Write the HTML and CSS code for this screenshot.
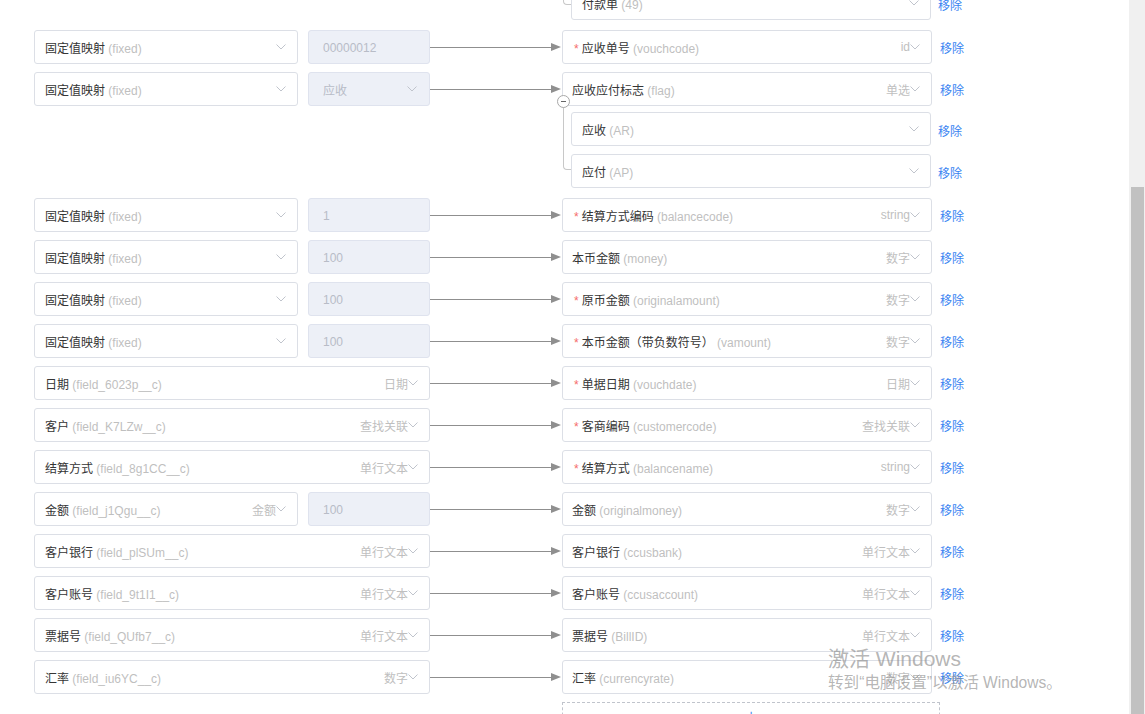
FILE: index.html
```html
<!DOCTYPE html>
<html lang="zh-CN">
<head>
  <meta charset="UTF-8" />
  <meta name="viewport" content="width=device-width, initial-scale=1.0"/>
  <title>字段映射</title>
  <link rel="stylesheet" href="styles.css">
</head>
<body>
  <div class="screen">
    <main class="canvas">
      <div class="mapping">

        <div class="children cont">
          <div class="sub">
            <div class="dst"><span class="name">付款单 <em>(49)</em></span><svg class="chev" viewBox="0 0 10 6"><path d="M.5.5 5 5l4.5-4.5"/></svg></div>
            <a class="remove">移除</a>
          </div>
        </div>

        <div class="row">
          <div class="src">
            <div class="sel"><span class="name">固定值映射 <em>(fixed)</em></span><svg class="chev" viewBox="0 0 10 6"><path d="M.5.5 5 5l4.5-4.5"/></svg></div>
            <div class="val">00000012</div>
          </div>
          <div class="link"><span class="line"></span><span class="head"></span></div>
          <div class="dst"><span class="name"><b class="req">*</b>应收单号 <em>(vouchcode)</em></span><span class="type">id<svg class="chev" viewBox="0 0 10 6"><path d="M.5.5 5 5l4.5-4.5"/></svg></span></div>
          <a class="remove">移除</a>
        </div>

        <div class="row">
          <div class="src">
            <div class="sel"><span class="name">固定值映射 <em>(fixed)</em></span><svg class="chev" viewBox="0 0 10 6"><path d="M.5.5 5 5l4.5-4.5"/></svg></div>
            <div class="val pick"><span>应收</span><svg class="chev" viewBox="0 0 10 6"><path d="M.5.5 5 5l4.5-4.5"/></svg></div>
          </div>
          <div class="link"><span class="line"></span><span class="head"></span></div>
          <div class="dst"><span class="name">应收应付标志 <em>(flag)</em></span><span class="type">单选<svg class="chev" viewBox="0 0 10 6"><path d="M.5.5 5 5l4.5-4.5"/></svg></span></div>
          <a class="remove">移除</a>
        </div>
        <div class="children">
          <span class="toggle"></span>
          <div class="sub">
            <div class="dst"><span class="name">应收 <em>(AR)</em></span><svg class="chev" viewBox="0 0 10 6"><path d="M.5.5 5 5l4.5-4.5"/></svg></div>
            <a class="remove">移除</a>
          </div>
          <div class="sub">
            <div class="dst"><span class="name">应付 <em>(AP)</em></span><svg class="chev" viewBox="0 0 10 6"><path d="M.5.5 5 5l4.5-4.5"/></svg></div>
            <a class="remove">移除</a>
          </div>
        </div>

        <div class="row">
          <div class="src">
            <div class="sel"><span class="name">固定值映射 <em>(fixed)</em></span><svg class="chev" viewBox="0 0 10 6"><path d="M.5.5 5 5l4.5-4.5"/></svg></div>
            <div class="val">1</div>
          </div>
          <div class="link"><span class="line"></span><span class="head"></span></div>
          <div class="dst"><span class="name"><b class="req">*</b>结算方式编码 <em>(balancecode)</em></span><span class="type">string<svg class="chev" viewBox="0 0 10 6"><path d="M.5.5 5 5l4.5-4.5"/></svg></span></div>
          <a class="remove">移除</a>
        </div>

        <div class="row">
          <div class="src">
            <div class="sel"><span class="name">固定值映射 <em>(fixed)</em></span><svg class="chev" viewBox="0 0 10 6"><path d="M.5.5 5 5l4.5-4.5"/></svg></div>
            <div class="val">100</div>
          </div>
          <div class="link"><span class="line"></span><span class="head"></span></div>
          <div class="dst"><span class="name">本币金额 <em>(money)</em></span><span class="type">数字<svg class="chev" viewBox="0 0 10 6"><path d="M.5.5 5 5l4.5-4.5"/></svg></span></div>
          <a class="remove">移除</a>
        </div>

        <div class="row">
          <div class="src">
            <div class="sel"><span class="name">固定值映射 <em>(fixed)</em></span><svg class="chev" viewBox="0 0 10 6"><path d="M.5.5 5 5l4.5-4.5"/></svg></div>
            <div class="val">100</div>
          </div>
          <div class="link"><span class="line"></span><span class="head"></span></div>
          <div class="dst"><span class="name"><b class="req">*</b>原币金额 <em>(originalamount)</em></span><span class="type">数字<svg class="chev" viewBox="0 0 10 6"><path d="M.5.5 5 5l4.5-4.5"/></svg></span></div>
          <a class="remove">移除</a>
        </div>

        <div class="row">
          <div class="src">
            <div class="sel"><span class="name">固定值映射 <em>(fixed)</em></span><svg class="chev" viewBox="0 0 10 6"><path d="M.5.5 5 5l4.5-4.5"/></svg></div>
            <div class="val">100</div>
          </div>
          <div class="link"><span class="line"></span><span class="head"></span></div>
          <div class="dst"><span class="name"><b class="req">*</b>本币金额（带负数符号） <em>(vamount)</em></span><span class="type">数字<svg class="chev" viewBox="0 0 10 6"><path d="M.5.5 5 5l4.5-4.5"/></svg></span></div>
          <a class="remove">移除</a>
        </div>

        <div class="row">
          <div class="src">
            <div class="sel full"><span class="name">日期 <em>(field_6023p__c)</em></span><span class="type">日期<svg class="chev" viewBox="0 0 10 6"><path d="M.5.5 5 5l4.5-4.5"/></svg></span></div>
          </div>
          <div class="link"><span class="line"></span><span class="head"></span></div>
          <div class="dst"><span class="name"><b class="req">*</b>单据日期 <em>(vouchdate)</em></span><span class="type">日期<svg class="chev" viewBox="0 0 10 6"><path d="M.5.5 5 5l4.5-4.5"/></svg></span></div>
          <a class="remove">移除</a>
        </div>

        <div class="row">
          <div class="src">
            <div class="sel full"><span class="name">客户 <em>(field_K7LZw__c)</em></span><span class="type">查找关联<svg class="chev" viewBox="0 0 10 6"><path d="M.5.5 5 5l4.5-4.5"/></svg></span></div>
          </div>
          <div class="link"><span class="line"></span><span class="head"></span></div>
          <div class="dst"><span class="name"><b class="req">*</b>客商编码 <em>(customercode)</em></span><span class="type">查找关联<svg class="chev" viewBox="0 0 10 6"><path d="M.5.5 5 5l4.5-4.5"/></svg></span></div>
          <a class="remove">移除</a>
        </div>

        <div class="row">
          <div class="src">
            <div class="sel full"><span class="name">结算方式 <em>(field_8g1CC__c)</em></span><span class="type">单行文本<svg class="chev" viewBox="0 0 10 6"><path d="M.5.5 5 5l4.5-4.5"/></svg></span></div>
          </div>
          <div class="link"><span class="line"></span><span class="head"></span></div>
          <div class="dst"><span class="name"><b class="req">*</b>结算方式 <em>(balancename)</em></span><span class="type">string<svg class="chev" viewBox="0 0 10 6"><path d="M.5.5 5 5l4.5-4.5"/></svg></span></div>
          <a class="remove">移除</a>
        </div>

        <div class="row">
          <div class="src">
            <div class="sel"><span class="name">金额 <em>(field_j1Qgu__c)</em></span><span class="type">金额<svg class="chev" viewBox="0 0 10 6"><path d="M.5.5 5 5l4.5-4.5"/></svg></span></div>
            <div class="val">100</div>
          </div>
          <div class="link"><span class="line"></span><span class="head"></span></div>
          <div class="dst"><span class="name">金额 <em>(originalmoney)</em></span><span class="type">数字<svg class="chev" viewBox="0 0 10 6"><path d="M.5.5 5 5l4.5-4.5"/></svg></span></div>
          <a class="remove">移除</a>
        </div>

        <div class="row">
          <div class="src">
            <div class="sel full"><span class="name">客户银行 <em>(field_plSUm__c)</em></span><span class="type">单行文本<svg class="chev" viewBox="0 0 10 6"><path d="M.5.5 5 5l4.5-4.5"/></svg></span></div>
          </div>
          <div class="link"><span class="line"></span><span class="head"></span></div>
          <div class="dst"><span class="name">客户银行 <em>(ccusbank)</em></span><span class="type">单行文本<svg class="chev" viewBox="0 0 10 6"><path d="M.5.5 5 5l4.5-4.5"/></svg></span></div>
          <a class="remove">移除</a>
        </div>

        <div class="row">
          <div class="src">
            <div class="sel full"><span class="name">客户账号 <em>(field_9t1I1__c)</em></span><span class="type">单行文本<svg class="chev" viewBox="0 0 10 6"><path d="M.5.5 5 5l4.5-4.5"/></svg></span></div>
          </div>
          <div class="link"><span class="line"></span><span class="head"></span></div>
          <div class="dst"><span class="name">客户账号 <em>(ccusaccount)</em></span><span class="type">单行文本<svg class="chev" viewBox="0 0 10 6"><path d="M.5.5 5 5l4.5-4.5"/></svg></span></div>
          <a class="remove">移除</a>
        </div>

        <div class="row">
          <div class="src">
            <div class="sel full"><span class="name">票据号 <em>(field_QUfb7__c)</em></span><span class="type">单行文本<svg class="chev" viewBox="0 0 10 6"><path d="M.5.5 5 5l4.5-4.5"/></svg></span></div>
          </div>
          <div class="link"><span class="line"></span><span class="head"></span></div>
          <div class="dst"><span class="name">票据号 <em>(BillID)</em></span><span class="type">单行文本<svg class="chev" viewBox="0 0 10 6"><path d="M.5.5 5 5l4.5-4.5"/></svg></span></div>
          <a class="remove">移除</a>
        </div>

        <div class="row">
          <div class="src">
            <div class="sel full"><span class="name">汇率 <em>(field_iu6YC__c)</em></span><span class="type">数字<svg class="chev" viewBox="0 0 10 6"><path d="M.5.5 5 5l4.5-4.5"/></svg></span></div>
          </div>
          <div class="link"><span class="line"></span><span class="head"></span></div>
          <div class="dst"><span class="name">汇率 <em>(currencyrate)</em></span><span class="type">数字<svg class="chev" viewBox="0 0 10 6"><path d="M.5.5 5 5l4.5-4.5"/></svg></span></div>
          <a class="remove">移除</a>
        </div>

        <div class="add"><span class="plus">+</span></div>
      </div>
    </main>
    <div class="scrollbar"><div class="thumb"></div></div>
  </div>

  <div class="activate">
    <div class="activate-title">激活 Windows</div>
    <div class="activate-text">转到“电脑设置”以激活 Windows。</div>
  </div>
</body>
</html>
```

FILE: styles.css
```css
body {
  margin: 0;
  font-family: "Liberation Sans", "Noto Sans CJK SC", sans-serif;
  font-size: 12px;
  color: #353535;
  background: #fff;
  overflow: hidden;
}
.screen {
  display: flex;
  height: 100vh;
}
.canvas {
  flex: 1;
  overflow: hidden;
  padding-left: 34px;
}
.scrollbar {
  width: 16px;
  background: #f0f0f0;
  padding-top: 187px;
  display: flex;
}
.thumb {
  width: 13px;
  margin-left: 2px;
  background: #c1c1c1;
}

.mapping {
  margin-top: -14px;
}
.row {
  display: grid;
  grid-template-columns: 396px 132px 370px auto;
  align-items: center;
  height: 34px;
  margin-bottom: 8px;
}
.src {
  display: flex;
  gap: 10px;
}
.sel, .val, .dst {
  box-sizing: border-box;
  height: 34px;
  border: 1px solid #dcdfe6;
  border-radius: 3px;
  display: flex;
  align-items: center;
  white-space: nowrap;
}
.sel {
  width: 264px;
  padding: 0 11px 0 10px;
}
.sel.full {
  width: 396px;
}
.val {
  width: 122px;
  padding: 1px 12px 0 14px;
  background: #edf0f7;
  border-color: #dfe3ee;
  color: #b8bcc7;
}
.val.pick {
  padding-top: 0;
}
.val.pick span {
  flex: 1;
}
.dst {
  width: 370px;
  padding: 0 11px 0 9px;
}
.name {
  flex: 1;
}
.name em {
  font-style: normal;
  color: #bfbfbf;
}
.req {
  font-weight: normal;
  color: #f56c6c;
  margin: 0 3px 0 2px;
}
.type {
  display: flex;
  align-items: center;
  color: #bfbfbf;
}
.chev {
  width: 10px;
  height: 6px;
  fill: none;
  stroke: #c0c4cc;
  stroke-width: 1;
}
.link {
  display: flex;
  align-items: center;
}
.line {
  flex: 1;
  height: 1px;
  background: #8f8f8f;
}
.head {
  width: 0;
  height: 0;
  border-left: 10px solid #8f8f8f;
  border-top: 4px solid transparent;
  border-bottom: 4px solid transparent;
  margin-right: 1px;
}
.remove {
  color: #3a84f2;
  margin-left: 8px;
  cursor: pointer;
}

.children {
  display: flow-root;
  position: relative;
  margin: -2px 0 2px;
}
.children::before {
  content: "";
  position: absolute;
  left: 529px;
  top: -5px;
  width: 7px;
  height: 62px;
  border-left: 1px solid #c8c8c8;
  border-bottom: 1px solid #c8c8c8;
  border-bottom-left-radius: 4px;
}
.children.cont {
  margin-top: 0;
}
.children.cont::before {
  top: -24px;
  height: 42px;
}
.toggle {
  position: absolute;
  left: 523px;
  top: -17px;
  box-sizing: border-box;
  width: 13px;
  height: 13px;
  border: 1px solid #a8a8a8;
  border-radius: 50%;
  background: #fff;
  z-index: 1;
}
.toggle::after {
  content: "";
  position: absolute;
  left: 3px;
  top: 5px;
  width: 5px;
  height: 1px;
  background: #666;
}
.sub {
  display: flex;
  align-items: center;
  height: 34px;
  margin-bottom: 8px;
  padding-left: 537px;
}
.sub .dst {
  width: 360px;
  padding-left: 10px;
}
.sub .remove {
  margin-left: 7px;
  padding-top: 3px;
}

.add {
  box-sizing: border-box;
  width: 378px;
  height: 40px;
  margin-left: 528px;
  border: 1px dashed #c0c4cc;
  text-align: center;
  padding-top: 4px;
}
.plus {
  color: #3a84f2;
  font-size: 14px;
}

.activate {
  position: absolute;
  left: 828px;
  top: 645px;
  color: rgba(140, 140, 140, 0.65);
  pointer-events: none;
}
.activate-title {
  font-size: 21px;
  line-height: 27px;
}
.activate-text {
  font-size: 15.6px;
  line-height: 20px;
  margin-top: 1px;
}
```
